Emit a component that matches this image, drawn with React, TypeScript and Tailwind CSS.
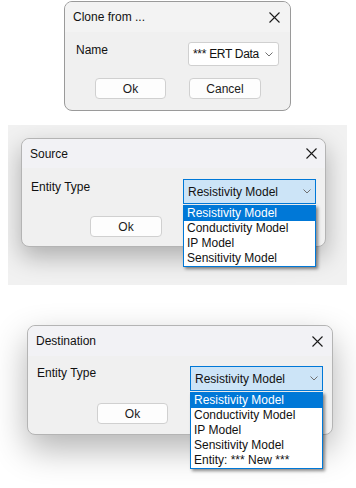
import React from "react";

const font = { fontFamily: '"Liberation Sans", Arial, sans-serif' };

function XIcon() {
  return (
    <svg width="11" height="11" viewBox="0 0 11 11" className="block">
      <path d="M0.5 0.5 L10.5 10.5 M10.5 0.5 L0.5 10.5" stroke="#1a1a1a" strokeWidth="1.1" fill="none" />
    </svg>
  );
}

function Chevron() {
  return (
    <svg width="8" height="5" viewBox="0 0 8 5" className="block shrink-0">
      <path d="M0.5 0.5 L4 4 L7.5 0.5" stroke="#707070" strokeWidth="1" fill="none" />
    </svg>
  );
}

function Button({ label, w }: { label: string; w: string }) {
  return (
    <div
      className={`${w} h-[21px] bg-[#fdfdfd] border border-[#d0d0d0] rounded-[4px] flex items-center justify-center text-[12px] text-[#1b1b1b]`}
    >
      {label}
    </div>
  );
}

function Dropdown({ items }: { items: string[] }) {
  return (
    <div className="absolute left-0 top-[26px] w-[133px] bg-white border border-[#0078d7] shadow-[2px_2px_3px_rgba(0,0,0,0.45)] z-10">
      {items.map((it, i) => (
        <div
          key={it}
          className={`h-[15px] leading-[15px] pl-[3px] text-[12px] whitespace-nowrap ${
            i === 0 ? "bg-[#0078d7] text-white" : "text-[#111]"
          }`}
        >
          {it}
        </div>
      ))}
    </div>
  );
}

function BlueCombo({ items }: { items: string[] }) {
  return (
    <div className="relative w-[133px] h-[25px]">
      <div className="w-full h-full bg-[#cce4f7] border border-[#0078d7] flex items-center justify-between pl-[4px] pr-[4px] text-[12px] text-[#111]">
        <span>Resistivity Model</span>
        <Chevron />
      </div>
      <Dropdown items={items} />
    </div>
  );
}

export default function App() {
  const items4 = ["Resistivity Model", "Conductivity Model", "IP Model", "Sensitivity Model"];
  const items5 = [...items4, "Entity: *** New ***"];
  return (
    <div className="w-[356px] h-[488px] bg-white overflow-hidden flex flex-col" style={font}>
      {/* Panel 1 */}
      <div className="pt-[1px] pl-[64px]">
        <div className="w-[227px] h-[110px] border border-[#9a9a9a] rounded-[8px] bg-[#f0f0f0] overflow-hidden flex flex-col">
          <div className="h-[30px] bg-[#f3f3f3] flex items-center justify-between pl-[8px] pr-[10px] text-[12px] text-[#111]">
            <span>Clone from ...</span>
            <XIcon />
          </div>
          <div className="flex justify-between pl-[11px] pr-[11px] pt-[10px]">
            <span className="text-[12px] leading-[15px] mt-[1px] text-[#111]">Name</span>
            <div className="w-[91px] h-[24px] bg-white border border-[#d0d0d0] rounded-[3px] flex items-center justify-between pl-[4px] pr-[5px] text-[12px] tracking-[-0.3px] text-[#111]">
              <span className="whitespace-nowrap">*** ERT Data</span>
              <Chevron />
            </div>
          </div>
          <div className="flex pl-[30px] gap-[23px] mt-[12px]">
            <Button label="Ok" w="w-[71px]" />
            <Button label="Cancel" w="w-[72px]" />
          </div>
        </div>
      </div>

      {/* Panel 2 */}
      <div className="mt-[14px] ml-[8px] w-[339px] h-[160px] bg-[#f1f1f1] overflow-hidden pt-[13px] pl-[13px]">
        <div className="w-[305px] h-[109px] border border-[#b4b4b4] rounded-[8px] bg-[#f0f0f0] shadow-[0_10px_24px_rgba(0,0,0,0.28)] flex flex-col">
          <div className="h-[29px] bg-[#f2f2f5] rounded-t-[8px] flex items-center justify-between pl-[8px] pr-[8px] text-[12px] text-[#111]">
            <span>Source</span>
            <XIcon />
          </div>
          <div className="flex justify-between pl-[9px] pr-[9px] pt-[11px]">
            <span className="text-[12px] leading-[15px] mt-[1px] text-[#111]">Entity Type</span>
            <BlueCombo items={items4} />
          </div>
          <div className="flex pl-[68px] mt-[12px]">
            <Button label="Ok" w="w-[72px]" />
          </div>
        </div>
      </div>

      {/* Panel 3 */}
      <div className="pt-[40px] pl-[27px]">
        <div className="w-[306px] h-[110px] border border-[#b4b4b4] rounded-[8px] bg-[#f0f0f0] shadow-[0_14px_34px_rgba(0,0,0,0.3)] flex flex-col">
          <div className="h-[30px] bg-[#f2f2f5] rounded-t-[8px] flex items-center justify-between pl-[8px] pr-[9px] text-[12px] text-[#111]">
            <span>Destination</span>
            <XIcon />
          </div>
          <div className="flex justify-between pl-[9px] pr-[9px] pt-[10px]">
            <span className="text-[12px] leading-[15px] text-[#111]">Entity Type</span>
            <BlueCombo items={items5} />
          </div>
          <div className="flex pl-[69px] mt-[12px]">
            <Button label="Ok" w="w-[71px]" />
          </div>
        </div>
      </div>
    </div>
  );
}
